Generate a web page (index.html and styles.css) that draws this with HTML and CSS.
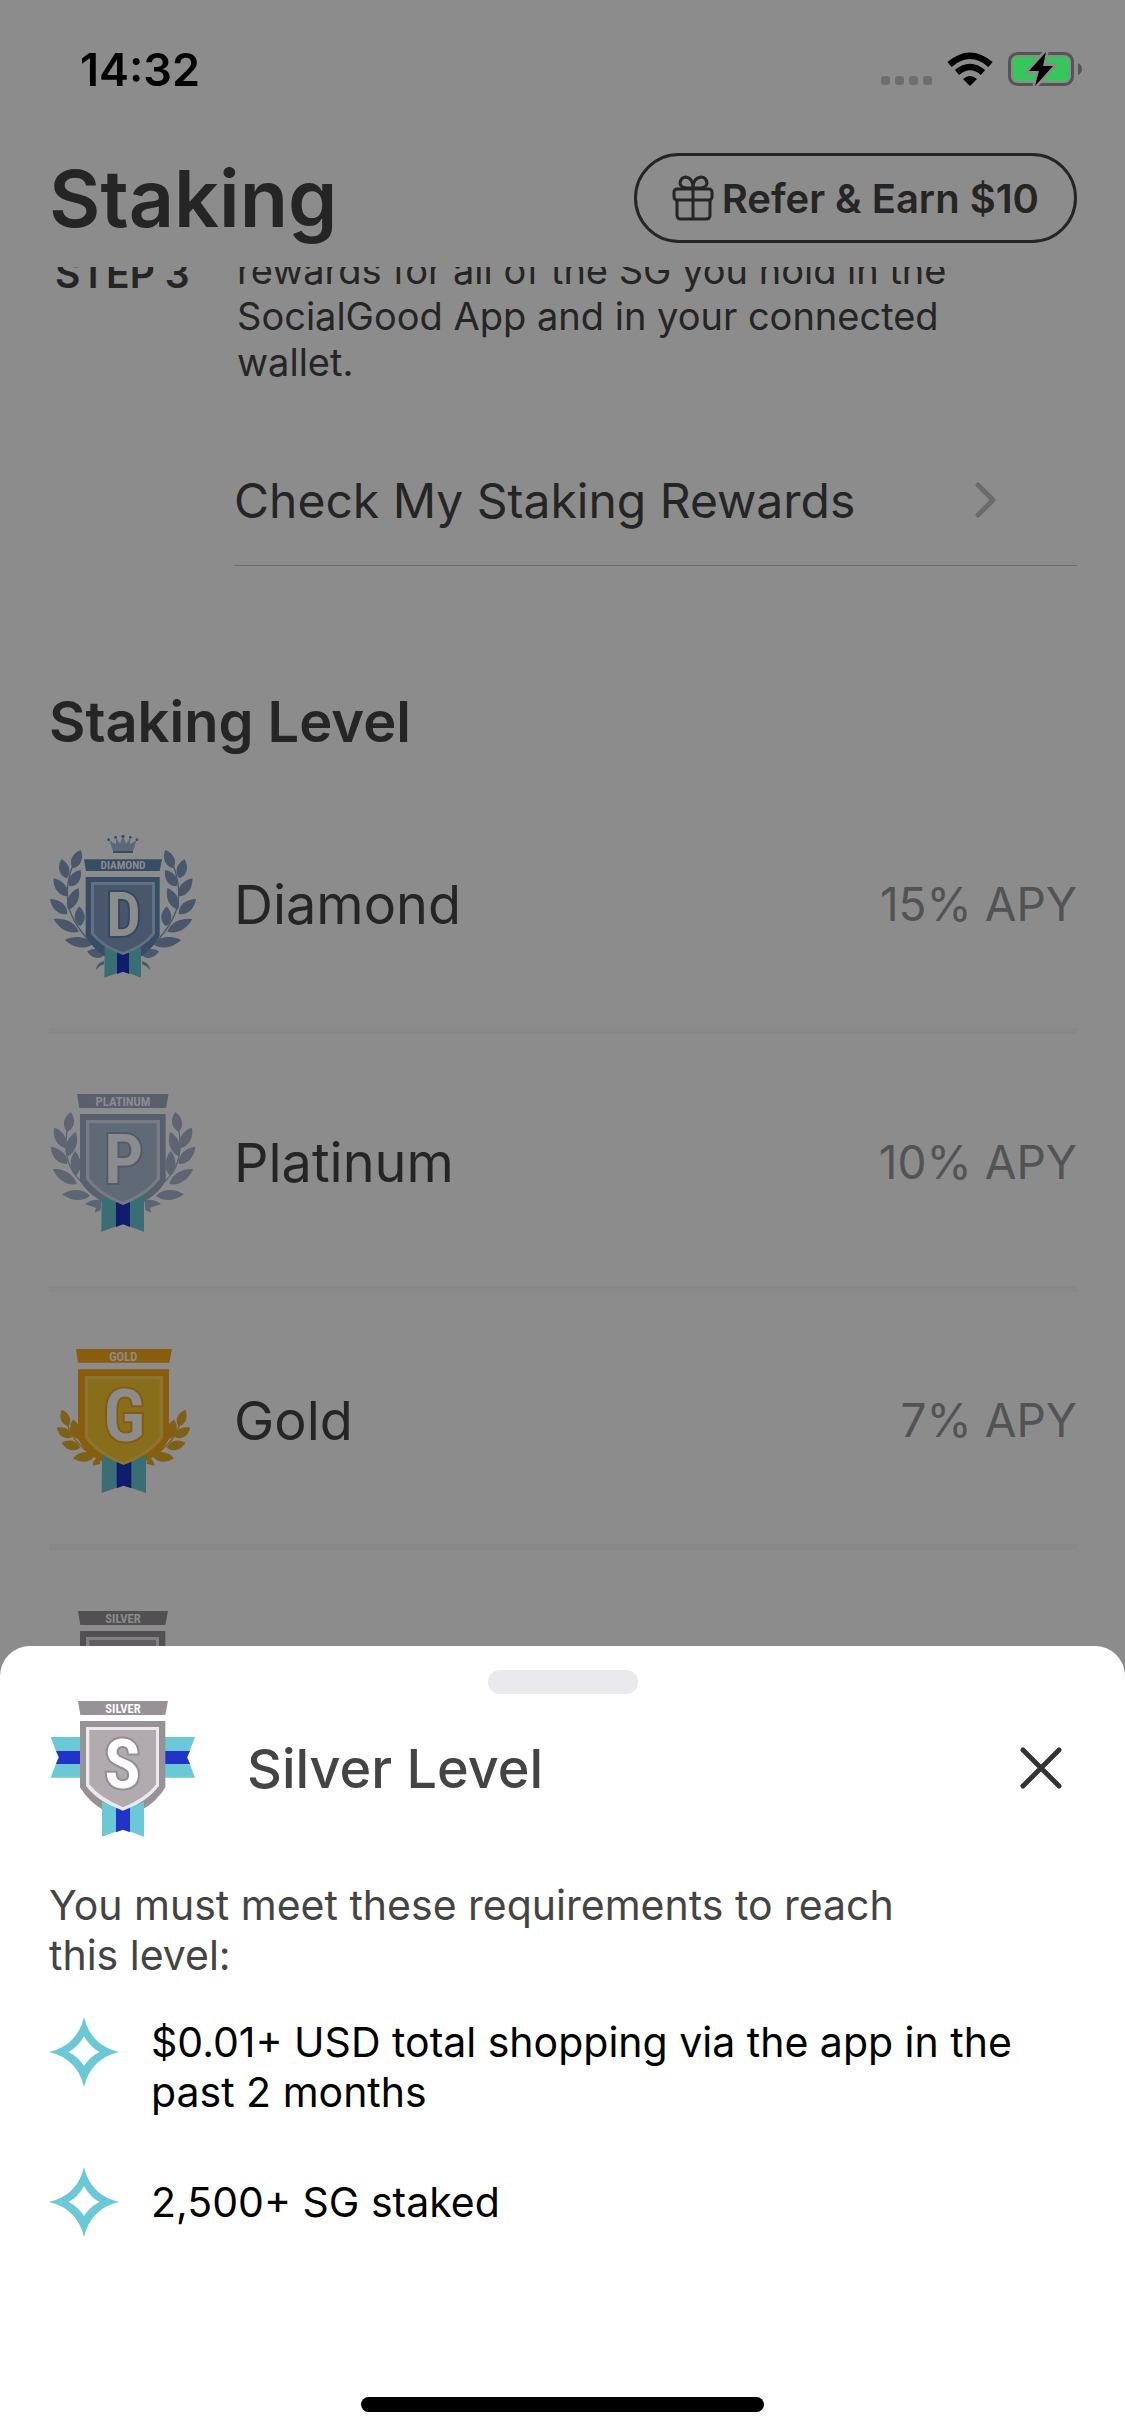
FILE: index.html
```html
<!DOCTYPE html>
<html lang="en">
<head>
<meta charset="utf-8">
<meta name="viewport" content="width=device-width, initial-scale=1">
<title>Staking</title>
<link rel="stylesheet" href="styles.css">
</head>
<body>
<svg class="defs" aria-hidden="true">
  <defs>
    <path id="leaf" d="M0 0C-20 -14 -20 -40 0 -60C20 -40 20 -14 0 0Z"/>
    <g id="laurel-diamond">
      <path d="M136 120Q100 200 118 270Q140 340 225 410" fill="none" stroke="currentColor" stroke-width="4"/>
      <use href="#leaf" transform="translate(128 148) rotate(24)"/>
      <use href="#leaf" transform="translate(110 178) rotate(-15)"/>
      <use href="#leaf" transform="translate(118 202) rotate(35)"/>
      <use href="#leaf" transform="translate(113 232) rotate(-38) scale(1 1.15)"/>
      <use href="#leaf" transform="translate(114 272) rotate(26) scale(1 1.2)"/>
      <use href="#leaf" transform="translate(112 285) rotate(-49) scale(1 1.15)"/>
      <use href="#leaf" transform="translate(150 322) rotate(-2)"/>
      <use href="#leaf" transform="translate(146 338) rotate(-63) scale(1 1.4)"/>
      <use href="#leaf" transform="translate(188 376) rotate(-81) scale(1 1.4)"/>
      <use href="#leaf" transform="translate(224 408) rotate(-79) scale(.9 .9)"/>
      <path d="M198 452Q200 432 222 426V436Q208 440 198 452Z"/>
    </g>
    <g id="laurel-platinum">
      <path d="M112 180Q98 260 130 310Q160 350 222 402" fill="none" stroke="currentColor" stroke-width="4"/>
      <use href="#leaf" transform="translate(112 188) rotate(10)"/>
      <use href="#leaf" transform="translate(108 238) rotate(-30) scale(1 1.2)"/>
      <use href="#leaf" transform="translate(112 262) rotate(19) scale(1 1.3)"/>
      <use href="#leaf" transform="translate(112 285) rotate(-44) scale(1 1.2)"/>
      <use href="#leaf" transform="translate(138 320) rotate(-2) scale(1 1.25)"/>
      <use href="#leaf" transform="translate(140 345) rotate(-58) scale(1 1.4)"/>
      <use href="#leaf" transform="translate(180 380) rotate(-87) scale(1 1.4)"/>
      <path d="M165 406Q185 388 214 394L212 424L194 431L198 416Z"/>
    </g>
    <g id="laurel-gold">
      <path d="M112 285Q130 350 215 395" fill="none" stroke="currentColor" stroke-width="4"/>
      <use href="#leaf" transform="translate(116 292) rotate(-23) scale(.9)"/>
      <use href="#leaf" transform="translate(142 330) rotate(-13)"/>
      <use href="#leaf" transform="translate(126 325) rotate(-58) scale(.9)"/>
      <use href="#leaf" transform="translate(150 356) rotate(-75) scale(.95)"/>
      <use href="#leaf" transform="translate(194 380) rotate(-97) scale(.95 1.1)"/>
      <path d="M188 410Q186 395 205 385L212 404Z"/>
    </g>
    <symbol id="badge-silver" viewBox="57 27 444 480">
      <path fill="#6bc8d6" d="M62 174H168V296H62L85 235ZM495 174H388V296H495L472 235Z"/>
      <path fill="#2233c8" d="M78 216H168V255H78L87 235ZM480 216H388V255H480L471 235Z"/>
      <path fill="#989297" d="M144 66H414L406 108H151ZM150 126H406V325Q380 370 330 396L279 410L225 396Q176 370 150 325Z"/>
      <path fill="#ebe9ee" d="M168 144H387V320Q355 365 279 396Q200 365 168 320Z"/>
      <path fill="#6bc8d6" d="M216 369L279 392L342 369V473L279 450L216 473Z"/>
      <path fill="#2233c8" d="M258 382H300V460L279 452L258 460Z"/>
      <path fill="#ebe9ee" d="M168 318Q200 365 279 395Q355 365 387 318Z"/>
      <path fill="#b1abb0" d="M178 153H378V316Q350 355 279 385Q208 355 178 316Z"/>
      <text class="badge-name" x="279" y="101" font-size="38">SILVER</text>
      <text class="badge-letter" x="277" y="328" font-size="204" stroke="#938d92">S</text>
    </symbol>
  </defs>
</svg>

<header class="status">
  <time class="clock">14:32</time>
  <div class="status-icons">
    <span class="signal"><i></i><i></i><i></i><i></i></span>
    <svg width="46" height="34" viewBox="0 0 46 34" aria-label="Wi-Fi">
      <g fill="none" stroke="#000" stroke-width="6.5"><path d="M2.500 12.500Q23 -5 43.500 12.500"/><path d="M10 20.500Q23 9.500 36 20.500"/></g>
      <path d="M16 27Q23 21 30 27L23 34Z"/>
    </svg>
    <svg width="74" height="38" viewBox="0 0 74 38" aria-label="Battery charging">
      <rect x="1.500" y="3.500" width="63" height="31" rx="8" fill="none" stroke="#555" stroke-width="3"/>
      <path fill="#555" d="M70 13Q74 15 74 19T70 25Z"/>
      <rect x="5" y="7" width="56" height="24" rx="4" fill="#34c759"/>
      <path d="M38 2L21 21H31L27 36L45 16H35Z" stroke="#8c8c8c" stroke-width="5" fill="#8c8c8c"/>
      <path d="M38 2L21 21H31L27 36L45 16H35Z"/>
    </svg>
  </div>
</header>

<div class="page">
  <div class="topbar">
    <h1>Staking</h1>
    <button class="refer" type="button">
      <svg width="42" height="46" viewBox="0 0 42 46" fill="none" stroke="#444" stroke-width="3" aria-hidden="true">
        <rect x="2" y="14" width="38" height="11" rx="3"/>
        <path d="M5 25V40Q5 44 9 44H34Q38 44 38 40V25M21 13V44M21 13H14Q8 12 8 8Q9 2 14 2Q21 3 21 13ZM21 13H29Q35 12 35 8Q34 2 29 2Q21 3 21 13Z"/>
      </svg>
      <span>Refer &amp; Earn $10</span>
    </button>
  </div>

  <main class="scroll">
    <section class="step">
      <h3>STEP 3</h3>
      <p>rewards for all of the SG you hold in the SocialGood App and in your connected wallet.</p>
    </section>
    <a class="check" href="#rewards">
      <span>Check My Staking Rewards</span>
      <svg width="22" height="36" viewBox="0 0 22 36" fill="none" stroke="#c4c4c6" stroke-width="5" stroke-linecap="round" stroke-linejoin="round" aria-hidden="true"><path d="M3 3L18 18L3 33"/></svg>
    </a>

    <h2>Staking Level</h2>
    <ul class="levels">
      <li>
        <svg class="badge" viewBox="57 15 444 480" aria-hidden="true">
          <g class="leaves-diamond"><use href="#laurel-diamond"/><use href="#laurel-diamond" transform="translate(558 0) scale(-1 1)"/></g>
          <path fill="#a3c0df" d="M249 96L238 64L258 76L258 56L270 74L279 52L288 74L301 56L300 76L320 64L309 96Z"/>
          <g fill="#648bb8"><path d="M249 96H309V102H249Z"/><circle cx="236" cy="62" r="4"/><circle cx="257" cy="55" r="4"/><circle cx="279" cy="52" r="5"/><circle cx="301" cy="55" r="4"/><circle cx="321" cy="62" r="4"/>
          <path d="M162 121H396L389 156H168ZM167 174H389V350Q350 420 279 430Q205 420 167 350Z"/></g>
          <path fill="#6bc8d6" d="M224 382L279 400L333 382V476L279 456L223 476Z"/>
          <path fill="#2233c8" d="M261 390H297V465L279 458L261 465Z"/>
          <path fill="#b2cceb" d="M183 189H375V345Q345 385 279 408Q213 385 183 345Z"/>
          <path fill="#839fc4" d="M192 198H366V342Q340 378 279 399Q218 378 192 342Z"/>
          <text class="badge-name" x="279" y="150" font-size="34">DIAMOND</text>
          <text class="badge-letter" x="281" y="352" font-size="184" stroke="#5f84b0">D</text>
        </svg>
        <span class="name">Diamond</span><span class="apy">15% APY</span>
      </li>
      <li>
        <svg class="badge" viewBox="57 39 444 480" aria-hidden="true">
          <g class="leaves-platinum"><use href="#laurel-platinum"/><use href="#laurel-platinum" transform="translate(558 0) scale(-1 1)"/></g>
          <path fill="#a0b0c9" d="M141 75H416L408 117H148ZM150 135H407V335Q370 402 279 415Q190 402 150 335Z"/>
          <path fill="#6bc8d6" d="M215 380L279 400L342 380V488L279 465L214 488Z"/>
          <path fill="#2233c8" d="M258 390H300V474L279 466L258 474Z"/>
          <path fill="#d9e0ee" d="M168 153H390V330Q355 378 279 408Q203 378 168 330Z"/>
          <path fill="#b0bfd8" d="M178 163H380V326Q350 370 279 398Q208 370 178 326Z"/>
          <text class="badge-name" x="279" y="110" font-size="38">PLATINUM</text>
          <text class="badge-letter" x="281" y="342" font-size="208" stroke="#94a6c2">P</text>
        </svg>
        <span class="name">Platinum</span><span class="apy">10% APY</span>
      </li>
      <li>
        <svg class="badge" viewBox="57 33 444 480" aria-hidden="true">
          <g class="leaves-gold"><use href="#laurel-gold"/><use href="#laurel-gold" transform="translate(561 0) scale(-1 1)"/></g>
          <path fill="#f9a91a" d="M138 60H426L418 101H144ZM144 121H417V330Q380 402 281 415Q182 402 144 330Z"/>
          <path fill="#6bc8d6" d="M216 380L281 400L348 380V492L281 469L215 492Z"/>
          <path fill="#2233c8" d="M260 390H304V478L281 470L260 478Z"/>
          <path fill="#fbd55c" d="M165 141H399V328Q360 378 281 408Q202 378 165 328Z"/>
          <path fill="#f8c831" d="M174 151H389V324Q355 370 281 398Q208 370 174 324Z"/>
          <text class="badge-name" x="280" y="95" font-size="38">GOLD</text>
          <text class="badge-letter" x="283" y="337" font-size="214" stroke="#f2a81b">G</text>
        </svg>
        <span class="name">Gold</span><span class="apy">7% APY</span>
      </li>
      <li>
        <svg class="badge" aria-hidden="true"><use href="#badge-silver"/></svg>
      </li>
    </ul>
  </main>
</div>

<div class="scrim"></div>

<section class="sheet" role="dialog" aria-labelledby="sheet-title">
  <div class="handle"></div>
  <div class="sheet-head">
    <svg class="badge" aria-hidden="true"><use href="#badge-silver"/></svg>
    <h2 id="sheet-title">Silver Level</h2>
    <button class="close" type="button" aria-label="Close">
      <svg width="44" height="42" viewBox="0 0 44 42" fill="none" stroke="#333" stroke-width="5" stroke-linecap="round" aria-hidden="true"><path d="M4 3L40 39M40 3L4 39"/></svg>
    </button>
  </div>
  <p class="intro">You must meet these requirements to reach this level:</p>
  <ul class="needs">
    <li>
      <svg class="star" viewBox="0 0 210 210" aria-hidden="true"><path fill="#6bc8d6" fill-rule="evenodd" d="M105 0Q125 85 210 105Q125 125 105 210Q85 125 0 105Q85 85 105 0ZM105 58Q86 91 59 105Q86 119 105 146Q124 119 151 105Q124 91 105 58Z"/></svg>
      <span>$0.01+ USD total shopping via the app in the past 2 months</span>
    </li>
    <li>
      <svg class="star" viewBox="0 0 210 210" aria-hidden="true"><path fill="#6bc8d6" fill-rule="evenodd" d="M105 0Q125 85 210 105Q125 125 105 210Q85 125 0 105Q85 85 105 0ZM105 58Q86 91 59 105Q86 119 105 146Q124 119 151 105Q124 91 105 58Z"/></svg>
      <span>2,500+ SG staked</span>
    </li>
  </ul>
  <div class="home"></div>
</section>
</body>
</html>
```
FILE: styles.css
```css
* { box-sizing: border-box; margin: 0; padding: 0; }

body {
  height: 100vh;
  overflow: hidden;
  background: #fff;
  color: #444;
  font-family: Inter, "Liberation Sans", sans-serif;
}

ul { list-style: none; }
button { font: inherit; color: inherit; background: none; border: 0; }
svg { flex: none; display: block; }
.defs { position: absolute; width: 0; height: 0; }

.status {
  position: relative;
  z-index: 2;
  display: flex;
  justify-content: space-between;
  align-items: center;
  height: 138px;
  padding: 0 43px 0 80px;
  color: #000;
}
.clock { font-size: 45px; font-weight: 600; }
.status-icons { display: flex; align-items: center; gap: 15px; }
.signal { display: flex; gap: 5px; padding-top: 22px; }
.signal i { width: 9px; height: 9px; border-radius: 3px; background: #6e6e6e; }

.page { display: flex; flex-direction: column; height: calc(100vh - 138px); }
.topbar {
  display: flex;
  justify-content: space-between;
  align-items: center;
  flex: none;
  height: 129px;
  padding: 0 48px 9px 49px;
}
h1 { font-size: 79px; font-weight: 600; line-height: 96px; }
.refer {
  display: flex;
  align-items: center;
  gap: 8px;
  height: 90px;
  padding: 0 35px;
  border: 3px solid #444;
  border-radius: 45px;
  font-size: 40px;
  font-weight: 600;
}

.scroll {
  flex: 1;
  min-height: 0;
  overflow: hidden;
  display: flex;
  flex-direction: column;
  justify-content: flex-start;
  padding: 0 48px 0 49px;
}
.step {
  display: grid;
  grid-template-columns: 188px 1fr;
  padding-right: 96px;
  margin-top: -20px;
  line-height: 46px;
}
.step h3 { padding: 4px 0 0 6px; font-size: 39px; font-weight: 600; }
.step p { font-size: 38px; }
.check {
  display: flex;
  flex: none;
  justify-content: space-between;
  align-items: center;
  height: 131px;
  margin: 50px 0 0 185px;
  padding: 0 80px 0 0;
  border-bottom: 1px solid #c8c8cc;
  color: inherit;
  font-size: 48px;
  text-decoration: none;
}
.scroll h2 { flex: none; margin-top: 120px; font-size: 56px; font-weight: 600; line-height: 72px; }
.levels { flex: none; margin-top: 18px; }
.levels li {
  display: flex;
  align-items: center;
  height: 258px;
  padding-top: 4px;
  border-bottom: 6px solid #f8f8fa;
}
.badge { width: 148px; height: 160px; }
.badge-name, .badge-letter { font-family: "Roboto Condensed", Roboto, sans-serif; font-weight: 600; fill: #fff; text-anchor: middle; }
.badge-letter { stroke-width: 12px; paint-order: stroke; }
.leaves-diamond { fill: #839fc4; color: #839fc4; }
.leaves-platinum { fill: #a9b9d3; color: #a9b9d3; }
.leaves-gold { fill: #e9b02c; color: #e9b02c; }
.name { flex: 1; padding-left: 37px; font-size: 54px; }
.apy { font-size: 46px; color: #98989d; }

.scrim { position: fixed; inset: 0; z-index: 1; background: rgba(0, 0, 0, .45); }

.sheet {
  position: fixed;
  inset: auto 0 0;
  z-index: 3;
  display: flex;
  flex-direction: column;
  padding: 24px 49px;
  border-radius: 30px 30px 0 0;
  background: #fff;
}
.handle { align-self: center; width: 150px; height: 24px; border-radius: 12px; background: #e9e9ee; }
.sheet-head { display: flex; align-items: center; margin-top: -6px; }
.sheet-head h2 { flex: 1; padding-left: 50px; font-size: 54px; font-weight: 500; }
.close { padding: 12px 13px; }
.intro { max-width: 900px; margin-top: 32px; font-size: 41px; line-height: 50px; }
.needs { display: grid; gap: 50px; margin-top: 37px; color: #000; font-size: 41px; line-height: 50px; }
.needs li { display: flex; gap: 32px; }
.needs span { display: grid; align-content: center; min-height: 70px; }
.star { width: 70px; height: 70px; }
.home { align-self: center; width: 403px; height: 15px; margin-top: 160px; border-radius: 8px; background: #000; }
```
